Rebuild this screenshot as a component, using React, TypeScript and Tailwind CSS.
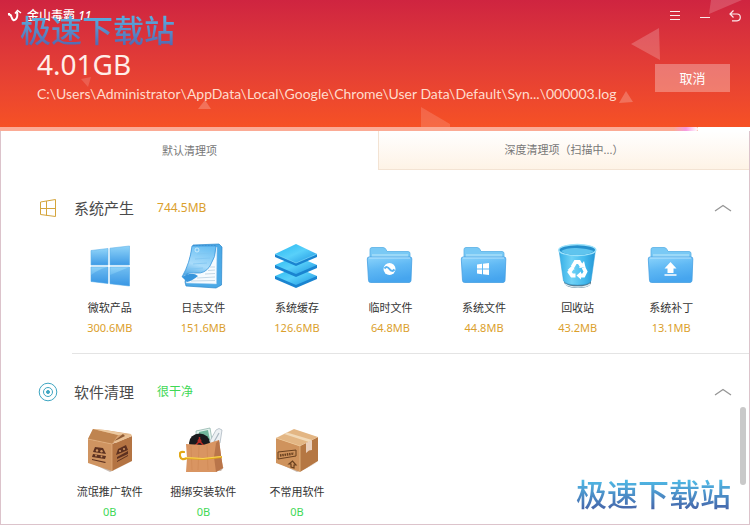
import React, { useState } from "react";

const WindowsIcon = () => (
  <svg viewBox="0 0 48 48" className="h-12 w-12">
    <defs>
      <linearGradient id="win" x1="0" y1="0" x2="0" y2="1">
        <stop offset="0" stopColor="#8fd3f8" />
        <stop offset="1" stopColor="#3f9be6" />
      </linearGradient>
    </defs>
    <g fill="url(#win)" stroke="#5fb2ea" strokeWidth="0.6">
      <path d="M5 8.5 22 6.5V23H5z" />
      <path d="M24 6.2 43.5 4V23H24z" />
      <path d="M5 25H22V41.5L5 39.5z" />
      <path d="M24 25H43.5V44L24 41.8z" />
    </g>
    <path d="M5 33Q13 27 22 25V41.5L5 39.5z" fill="#2f8fe2" opacity="0.35" />
    <path d="M24 33 43.5 25V44L24 41.8z" fill="#2f8fe2" opacity="0.3" />
  </svg>
);

const NotebookIcon = () => (
  <svg viewBox="0 0 48 48" className="h-12 w-12">
    <defs>
      <linearGradient id="note" x1="0.6" y1="0" x2="0.3" y2="1">
        <stop offset="0" stopColor="#6cc0f3" />
        <stop offset="0.6" stopColor="#a9dcfa" />
        <stop offset="1" stopColor="#4ea8e6" />
      </linearGradient>
    </defs>
    <path d="M14 3 40 2 43 5 42.5 43 37 46 7 44 6 40z" fill="#4ba9e6" stroke="#2b86cc" strokeWidth="0.7" />
    <path d="M15 5 38 5 37.5 42 7 41z" fill="#f6fbff" stroke="#9ccbee" strokeWidth="0.5" />
    <path d="M31 25 36 25M29 28.5 36 28M26 32 36 31.5M18 36 36 35M12 39 36 38.5" stroke="#b9cfdf" strokeWidth="0.8" />
    <path d="M13 4 37 4Q37 15 31 24 26 32 17 31 8 30 3 35 11 21 13 4z" fill="url(#note)" stroke="#3c98dc" strokeWidth="0.8" />
    <path d="M3 35Q13 29 19 34 13 39 8 40z" fill="#3795dc" />
    <path d="M18 12 33 11M16 17 31 16M14 22 28 21M11 27 24 26" stroke="#7fc5f1" strokeWidth="0.8" />
    <circle cx="18" cy="8" r="2" fill="none" stroke="#e5f6ff" strokeWidth="0.7" />
    <path d="M14 3.500 38 3.500" stroke="#3d93d4" strokeWidth="1" strokeDasharray="1.500 1.500" />
  </svg>
);

const StackIcon = () => (
  <svg viewBox="0 0 48 48" className="h-12 w-12">
    <defs>
      <linearGradient id="stack" x1="0" y1="0" x2="1" y2="1">
        <stop offset="0" stopColor="#27b8f0" />
        <stop offset="0.5" stopColor="#58d0fa" />
        <stop offset="1" stopColor="#1d93e0" />
      </linearGradient>
    </defs>
    <path d="M2 34V37L23 46 44 37V34z" fill="#1a84d0" />
    <path d="M23 25 44 34 23 43 2 34z" fill="url(#stack)" />
    <path d="M2 23V26L23 35 44 26V23z" fill="#1a84d0" />
    <path d="M23 14 44 23 23 32 2 23z" fill="url(#stack)" />
    <path d="M2 12V15L23 24 44 15V12z" fill="#1a84d0" />
    <path d="M23 2 44 12 23 21 2 12z" fill="url(#stack)" />
    <path d="M2 12 23 21 44 12" fill="none" stroke="#8be3ff" strokeWidth="0.6" />
  </svg>
);

const FolderIcon = ({ children }: { children: React.ReactNode }) => (
  <svg viewBox="0 0 48 48" className="h-12 w-12">
    <defs>
      <linearGradient id="folder" x1="0" y1="0" x2="0.3" y2="1">
        <stop offset="0" stopColor="#8ad3fb" />
        <stop offset="0.5" stopColor="#5fb8f4" />
        <stop offset="1" stopColor="#46a5ee" />
      </linearGradient>
    </defs>
    <path d="M4 16V7.5Q4 5.500 6 5.500H17Q19 5.500 20 7.500L21 9.500H42Q44 9.500 44 11.500V18H4z" fill="#79c9f5" stroke="#59b0e6" strokeWidth="0.8" />
    <path d="M6 12H42V15H6z" fill="#9bd9f8" />
    <path d="M3 15H44Q46 15 45.800 17L45 38.500Q44.800 40.500 43 40.500H4.500Q2.700 40.500 2.500 38.500L1.300 17Q1.200 15 3 15z" fill="url(#folder)" stroke="#459fe2" strokeWidth="0.8" />
    <path d="M3 16H44" stroke="#c5ebff" strokeWidth="0.8" />
    {children}
  </svg>
);

const BinIcon = () => (
  <svg viewBox="0 0 48 48" className="h-12 w-12">
    <defs>
      <linearGradient id="bin" x1="0" y1="0" x2="1" y2="0">
        <stop offset="0" stopColor="#35aee6" />
        <stop offset="0.35" stopColor="#70d2f6" />
        <stop offset="0.7" stopColor="#43b9ed" />
        <stop offset="1" stopColor="#2496d6" />
      </linearGradient>
    </defs>
    <path d="M10 39Q10 46 24 46T37 39z" fill="#557a90" />
    <path d="M11 42Q15 45 24 45T36 42" fill="none" stroke="#dcebf2" strokeWidth="1.3" />
    <path d="M5 8 9.5 39Q12 43 23.5 43T37 39L41.5 8z" fill="url(#bin)" stroke="#2f9fd8" strokeWidth="0.5" />
    <ellipse cx="23.3" cy="8" rx="18.5" ry="5.5" fill="#2590cc" stroke="#9ce2fb" strokeWidth="1.5" />
    <path d="M7 9Q13 5.500 23 6T40 9Q35 13 23 13T7 9z" fill="#5fc4ee" />
    <g fill="none" stroke="#fff" strokeWidth="3.8">
      <path d="M18.500 25 21.500 20H25L27.500 24" />
      <path d="M29.500 25.500 31.500 29.500 29.500 33.500H25.500" />
      <path d="M21.500 33.500H18L15.500 30 18 26.500" />
    </g>
    <g fill="#fff">
      <path d="M25 26 31.500 25.300 30 19z" />
      <path d="M27 29.500V37.500L22.500 33.500z" />
      <path d="M13.500 28 20.500 27.500 19 23z" />
    </g>
  </svg>
);

const BoxIcon = () => (
  <svg viewBox="0 0 48 48" className="h-12 w-12">
    <path d="M3 36 24 46 45 36 28 44z" fill="#c9bdb4" />
    <path d="M2 13 26 18V45L2 37z" fill="#cf9461" />
    <path d="M26 18 46 10V35L26 45z" fill="#b47443" />
    <path d="M2 13 7 3 19 4 45 8 26 18z" fill="#d9a473" />
    <path d="M7 3 32 9 26 18 2 13z" fill="#bf8450" />
    <path d="M7 3 19 4 41 8 32 9z" fill="#ecc9a0" />
    <path d="M28 15 36 9 45 8 46 10 30 17z" fill="#e8bf93" />
    <path d="M28 15 37 8 39 10 31 14z" fill="#8e5a34" />
    <path d="M2 13 26 18V45" fill="none" stroke="#e3b07f" strokeWidth="0.7" />
    <g fill="#5d3120">
      <path d="M9 21 17 22 20 28 7 26z" />
      <path d="M7 28 20 30 19 33 6 31z" />
      <path d="M6 33 20 36 19 37 6 34z" />
      <path d="M32 23 40 19 42 24 30 29z" />
      <path d="M31 31 42 25 42 28 31 33z" />
      <path d="M31 35 42 29 42 30 31 36z" />
    </g>
    <g fill="#cf9461">
      <circle cx="11" cy="24.500" r="1.200" />
      <circle cx="15.500" cy="25.200" r="1.200" />
      <circle cx="10" cy="29.500" r="0.900" />
      <circle cx="15.500" cy="30.500" r="0.900" />
      <circle cx="34" cy="25" r="1" />
      <circle cx="38" cy="23" r="1" />
    </g>
  </svg>
);

const BagIcon = () => (
  <svg viewBox="0 0 48 48" className="h-12 w-12">
    <path d="M8 45H42L45 41 36 46z" fill="#c9b8ac" />
    <path d="M17 5 31 2 34 20H18z" fill="#e3f3ee" stroke="#92b5ac" strokeWidth="0.8" />
    <path d="M20 6 29 4 31 14 20 15z" fill="#72b79c" />
    <path d="M31 15 37 4Q40 1 43 4L41 17 32 21z" fill="#edf1f4" stroke="#adb9c1" strokeWidth="0.8" />
    <path d="M35 16 40 7" stroke="#a9b6c0" strokeWidth="1.2" />
    <ellipse cx="20.500" cy="17" rx="10.500" ry="9.500" fill="#191b1d" />
    <circle cx="20.500" cy="15" r="2" fill="#b62c25" />
    <path d="M20.500 15 16 20M20.500 15 25 20M20.500 11V15" stroke="#b62c25" strokeWidth="1.500" />
    <path d="M7 18 24 19 40 14 42 30 44 42 37 46H7L8 32z" fill="#d99562" />
    <path d="M37 17 40 14 42 29 44 42 37 46 35 31z" fill="#b9754a" />
    <path d="M12 20 13 44M20 20 19 44M28 19 29 44" stroke="#cd8652" strokeWidth="0.6" />
    <path d="M5 26Q0 25 1 30T8 32L24 33 42 31" fill="none" stroke="#e2a817" strokeWidth="2.200" strokeLinecap="round" />
    <path d="M7 31.500 24 32.500 42 30.500" fill="none" stroke="#ffe06a" strokeWidth="0.8" />
  </svg>
);

const SealedBoxIcon = () => (
  <svg viewBox="0 0 48 48" className="h-12 w-12">
    <path d="M3 36 24 46 45 36 30 44z" fill="#c9bdb4" />
    <path d="M3 12 27 20V46L3 37z" fill="#cf935d" />
    <path d="M27 20 45 11V35L27 46z" fill="#b57743" />
    <path d="M3 12 21 3 45 11 27 20z" fill="#e3b684" />
    <path d="M11 8 14 6.500 39 14 36 16z" fill="#f1d9b8" />
    <path d="M33 17 39 14V24L36 24.500 33 27z" fill="#ead0bd" />
    <path d="M3 12 27 20V46" fill="none" stroke="#edc491" strokeWidth="0.7" />
    <path d="M5 26 23 24V30L5 33z" fill="none" stroke="#69401f" strokeWidth="1" />
    <path d="M7 29.500 21 27.500" stroke="#69401f" strokeWidth="2.400" strokeDasharray="1.500 0.800" />
    <path d="M18 41V38H16L19.500 35 23 39H21V42z" fill="none" stroke="#69401f" strokeWidth="1.200" />
  </svg>
);

type Item = { name: string; size: string; icon: React.ReactNode };

const systemItems: Item[] = [
  { name: "微软产品", size: "300.6MB", icon: <WindowsIcon /> },
  { name: "日志文件", size: "151.6MB", icon: <NotebookIcon /> },
  { name: "系统缓存", size: "126.6MB", icon: <StackIcon /> },
  {
    name: "临时文件",
    size: "64.8MB",
    icon: (
      <FolderIcon>
        <circle cx="23.5" cy="27" r="6" fill="#fff" />
        <path d="M18.500 26.500Q21 23.500 23.500 27T28.500 27.500" fill="none" stroke="#58b2f0" strokeWidth="2" />
      </FolderIcon>
    ),
  },
  {
    name: "系统文件",
    size: "44.8MB",
    icon: (
      <FolderIcon>
        <path d="M17 22.500 22 21.800V26.500H17zM23 21.700 29 21V26.500H23zM17 27.500H22V32.200L17 31.500zM23 27.500H29V33L23 32.300z" fill="#fff" />
      </FolderIcon>
    ),
  },
  { name: "回收站", size: "43.2MB", icon: <BinIcon /> },
  {
    name: "系统补丁",
    size: "13.1MB",
    icon: (
      <FolderIcon>
        <path d="M23.500 20 29.500 26.500H26.500V31H20.500V26.500H17.500z" fill="#fff" />
        <path d="M17.500 33H29.500" stroke="#fff" strokeWidth="1.500" />
      </FolderIcon>
    ),
  },
];

const softwareItems: Item[] = [
  { name: "流氓推广软件", size: "0B", icon: <BoxIcon /> },
  { name: "捆绑安装软件", size: "0B", icon: <BagIcon /> },
  { name: "不常用软件", size: "0B", icon: <SealedBoxIcon /> },
];

type SectionProps = {
  title: string;
  total: string;
  icon: React.ReactNode;
  items: Item[];
  color: string;
};

const Section = ({ title, total, icon, items, color }: SectionProps) => {
  const [open, setOpen] = useState(true);

  return (
    <section className="pt-[22px]">
      <div className="flex h-8 items-center pr-[17px] pl-9">
        {icon}
        <h2 className="ml-[15px] text-[15px] leading-5 text-[#4a4a4a]">{title}</h2>
        <span className={`ml-[23px] text-[12px] leading-4 ${color}`}>{total}</span>
        <button
          type="button"
          aria-label={title}
          aria-expanded={open}
          onClick={() => setOpen(!open)}
          className="ml-auto"
        >
          <svg viewBox="0 0 18 8" className={open ? "h-2 w-[18px]" : "h-2 w-[18px] rotate-180"}>
            <path d="M1 7 9 1.5 17 7" fill="none" stroke="#969696" strokeWidth="1.3" />
          </svg>
        </button>
      </div>
      {open && (
        <ul className="mt-[18px] grid grid-cols-7 pr-[31px] pl-[62px]">
          {items.map((item) => (
            <li key={item.name} className="flex flex-col items-center whitespace-nowrap">
              {item.icon}
              <span className="mt-[10px] text-[11px] leading-4 text-[#333]">{item.name}</span>
              <span className={`mt-1 text-[11px] leading-4 ${color}`}>{item.size}</span>
            </li>
          ))}
        </ul>
      )}
    </section>
  );
};

const App = () => {
  const [tab, setTab] = useState("default");
  const active = "bg-white";
  const inactive = "border-b border-l border-[#f3e3d3] bg-linear-to-b from-white to-[#fef3e6]";

  return (
    <div className="relative flex min-h-screen w-full flex-col border-x border-b border-[#dcc3cb] bg-white font-['Noto_Sans','Noto_Sans_CJK_SC',sans-serif]">
      <header className="relative -mx-px h-[127px] overflow-hidden bg-linear-to-b from-[#cf2440] to-[#f65124] text-white">
        {/* Floating triangles */}
        <svg
          viewBox="0 0 750 127"
          preserveAspectRatio="xMaxYMin slice"
          className="absolute inset-0 h-full w-full"
          fill="#fff"
        >
          <path d="M631 44 659 28 660 60z" opacity="0.2" />
          <path d="M711 0H742L709 14z" opacity="0.18" />
          <path d="M619 103 626 91 633 102z" opacity="0.22" />
          <path d="M421 107 450 124V127H421z" opacity="0.15" />
          <path d="M198 109 205 100 211 109z" opacity="0.22" />
          <path d="M81 79 91 77 88 87z" opacity="0.15" />
        </svg>

        <div className="relative flex h-8 items-center pl-[7px]">
          <svg viewBox="0 0 16 14" className="h-[14px] w-4" fill="none" stroke="#fff" strokeWidth="2">
            <path d="M1 5.500Q4 5 4.500 8 6 13 9 10 11 8 10 3" />
            <path d="M8 4.500 10.500 1.500 14 4" strokeWidth="1.500" />
            <path d="M1 5H3" />
          </svg>
          <span className="ml-1 text-[12px] leading-4 font-medium">
            金山毒霸 <i>11</i>
          </span>
          <div className="ml-auto flex items-center gap-[18px] pr-[9px]">
            <button type="button" aria-label="菜单">
              <svg viewBox="0 0 12 12" className="h-3 w-3" stroke="#fff" strokeOpacity="0.9">
                <path d="M1 1.5H11M1 5.5H11M1 9.5H11" />
              </svg>
            </button>
            <button type="button" aria-label="最小化">
              <svg viewBox="0 0 12 12" className="h-3 w-3" stroke="#fff" strokeOpacity="0.9">
                <path d="M1 7.5H11" />
              </svg>
            </button>
            <button type="button" aria-label="返回">
              <svg viewBox="0 0 12 12" className="h-3 w-3" fill="none" stroke="#fff" strokeOpacity="0.9" strokeWidth="1.2">
                <path d="M4.500 0.500 1 4 4.500 7.500M1 4H8Q11.300 4 11.300 7.300T8 10.800H3" />
              </svg>
            </button>
          </div>
        </div>

        <div className="relative flex items-center justify-between pr-5 pl-[37px]">
          <div>
            <h1 className="mt-4 text-[28px] leading-8 text-[#ffeee8]">4.01GB</h1>
            <p className="mt-1 font-[Lato,sans-serif] text-[14px] leading-5 text-[#ffdccd]">
              C:\Users\Administrator\AppData\Local\Google\Chrome\User Data\Default\Syn...\000003.log
            </p>
          </div>
          <button type="button" className="mt-5 h-7 w-[75px] shrink-0 bg-white/30 text-[13px] leading-5">
            取消
          </button>
        </div>
      </header>

      {/* Scan progress */}
      <div className="-mx-px h-1 bg-white">
        <div className="flex h-1 w-[93%] justify-end bg-[#fbab95]">
          <div className="h-1 w-6 rounded-r-full bg-linear-to-r from-[#fbab95] via-[#f59ae0] to-white" />
        </div>
      </div>

      <nav className="flex h-[39px] text-[11px] leading-4 text-[#777]">
        <button
          type="button"
          onClick={() => setTab("default")}
          className={`w-[377px] grow ${tab === "default" ? active : inactive}`}
        >
          默认清理项
        </button>
        <button
          type="button"
          onClick={() => setTab("deep")}
          className={`w-[371px] grow ${tab === "deep" ? active : inactive}`}
        >
          深度清理项（扫描中...）
        </button>
      </nav>

      <main className="flex-1">
        <Section
          title="系统产生"
          total="744.5MB"
          color="text-[#dba02c]"
          items={systemItems}
          icon={
            <svg viewBox="0 0 22 22" className="h-[22px] w-[22px]" fill="none" stroke="#d4a53c">
              <path d="M3.500 5 18.500 2.500V19.500L3.500 17.500zM9.500 4V18.500M3.500 11.500H18.500" />
            </svg>
          }
        />
        <hr className="mt-[17px] ml-[71px] border-[#e4e4e4]" />
        <Section
          title="软件清理"
          total="很干净"
          color="text-[#3fd856]"
          items={softwareItems}
          icon={
            <svg viewBox="0 0 22 22" className="h-[22px] w-[22px]" fill="none" stroke="#3fa6c2">
              <circle cx="11" cy="11" r="8.8" />
              <circle cx="11" cy="11" r="4.5" />
              <circle cx="11" cy="11" r="1.5" fill="#3fa6c2" />
            </svg>
          }
        />
      </main>

      {/* Scroll thumb */}
      <div className="absolute right-[3px] bottom-[39px] h-[78px] w-1.5 rounded-full bg-[#c9c9c9]" />

      {/* Site marks */}
      <span className="absolute top-[14px] left-[19px] bg-linear-to-b from-[#58b4e4] to-[#5368b0] bg-clip-text text-[31px] leading-8 font-medium text-transparent">
        极速下载站
      </span>
      <span className="absolute right-[18px] bottom-[14px] bg-linear-to-b from-[#4fc0ea] to-[#4463a8] bg-clip-text text-[31px] leading-8 font-medium text-transparent">
        极速下载站
      </span>
    </div>
  );
};

export default App;
